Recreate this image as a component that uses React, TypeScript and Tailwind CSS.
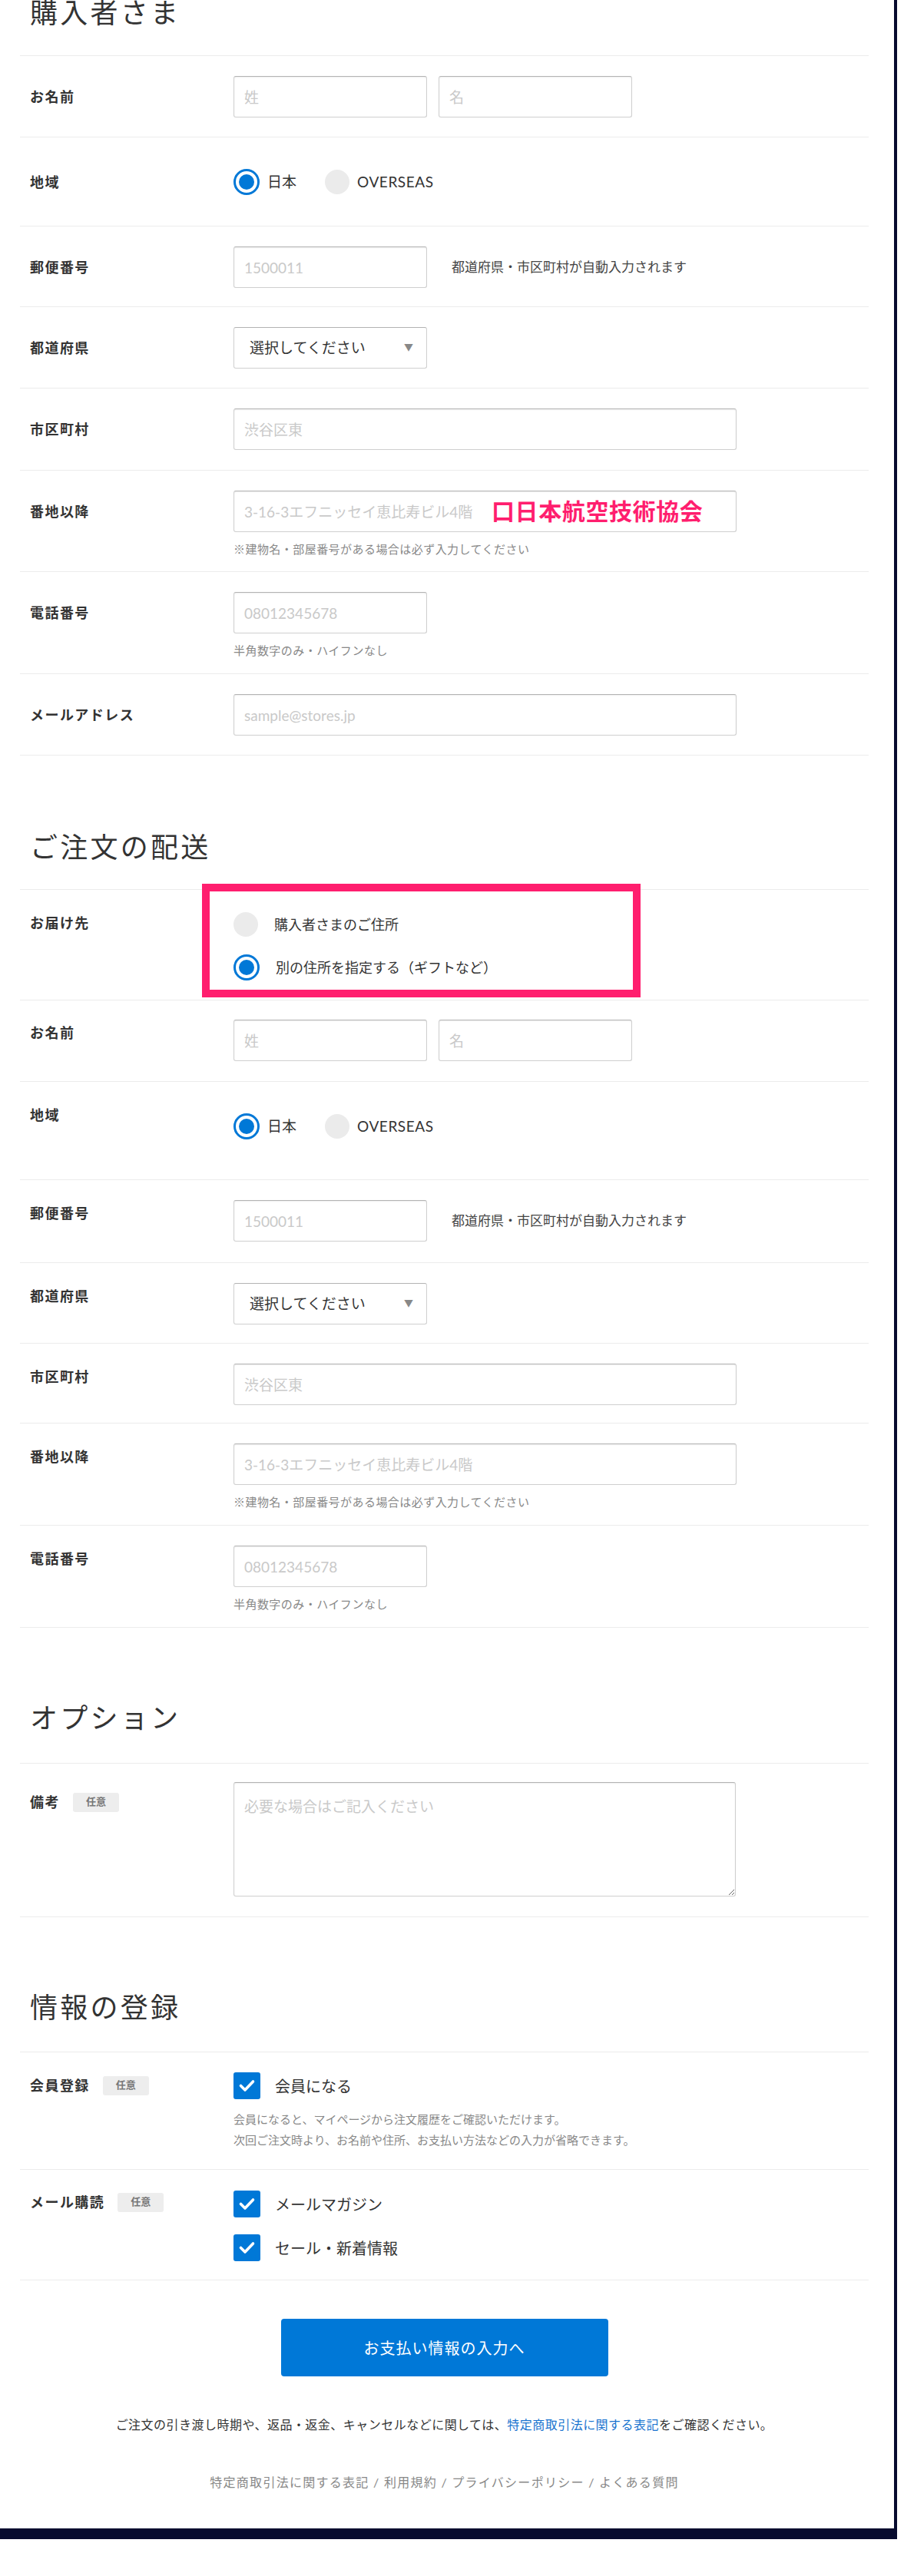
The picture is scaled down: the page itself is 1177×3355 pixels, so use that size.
import React from "react";

const inputCls =
  "h-[54px] rounded-[3px] border border-[#cfcfcf] border-t-[#b3b3b3] bg-white px-[13px] text-[19px] text-[#333] placeholder:text-[#c9c9c9] shadow-[inset_0_1px_2px_rgba(0,0,0,0.07)] outline-none";

type RowProps = {
  label: string;
  badge?: boolean;
  labelH?: string;
  pt?: string;
  pb?: string;
  children: React.ReactNode;
};

const Row = ({ label, badge, labelH = "h-[54px]", pt = "pt-[26px]", pb = "pb-[25px]", children }: RowProps) => (
  <div className={`relative flex border-b border-[#ececec] ${pt} ${pb}`}>
    <div className={`flex w-[278px] shrink-0 items-center gap-[17px] self-start pl-[13px] ${labelH}`}>
      <span className="text-[18px] font-bold tracking-[0.08em] text-[#333]">{label}</span>
      {badge && (
        <span className="flex h-[25px] w-[60px] items-center justify-center rounded-[3px] bg-[#ededed] text-[13px] font-bold text-[#777]">
          任意
        </span>
      )}
    </div>
    <div className="min-w-0 flex-1">{children}</div>
  </div>
);

const Field = ({ placeholder, w }: { placeholder: string; w: string }) => (
  <input placeholder={placeholder} className={`${inputCls} ${w}`} />
);

const Helper = ({ text }: { text: string }) => (
  <p className="mt-[12px] text-[15px] leading-[20px] tracking-[0.03em] text-[#888]">{text}</p>
);

const RadioOn = () => (
  <span className="flex h-[34px] w-[34px] shrink-0 items-center justify-center rounded-full border-[3px] border-[#0078d7] bg-white">
    <span className="h-[20px] w-[20px] rounded-full bg-[#0078d7]" />
  </span>
);

const RadioOff = () => <span className="block h-[32px] w-[32px] shrink-0 rounded-full bg-[#ebebeb]" />;

const CheckBox = () => (
  <span className="flex h-[35px] w-[35px] shrink-0 items-center justify-center rounded-[3px] bg-[#0078d7]">
    <svg width="35" height="35" viewBox="0 0 35 35" fill="none">
      <path d="M9.5 17.5 L15 23 L25.5 12" stroke="white" strokeWidth="3.6" strokeLinecap="round" strokeLinejoin="round" />
    </svg>
  </span>
);

const Heading = ({ text, className }: { text: string; className: string }) => (
  <h2 className={`pl-[13px] text-[36px] leading-[38px] tracking-[0.09em] text-[#333] ${className}`}>{text}</h2>
);

const Region = ({ pb = "pb-[25px]", labelH = "h-[64px]" }: { pb?: string; labelH?: string }) => (
  <Row label="地域" labelH={labelH} pb={pb}>
    <div className="flex h-[64px] items-center">
      <RadioOn />
      <span className="ml-[10px] text-[19px] text-[#333]">日本</span>
      <span className="ml-[37px] block">
        <RadioOff />
      </span>
      <span className="ml-[10px] text-[19px] tracking-[0.03em] text-[#333]">OVERSEAS</span>
    </div>
  </Row>
);

const Select = () => (
  <div className="flex h-[54px] w-[252px] items-center justify-between rounded-[3px] border border-[#cfcfcf] border-t-[#b3b3b3] bg-white pl-[20px] pr-[17px]">
    <span className="text-[19px] text-[#333]">選択してください</span>
    <span className="text-[12px] text-[#888]">▼</span>
  </div>
);

const NameFields = () => (
  <div className="flex gap-[15px]">
    <Field placeholder="姓" w="w-[252px]" />
    <Field placeholder="名" w="w-[252px]" />
  </div>
);

export default function App() {
  return (
    <div className="min-h-[3355px] bg-white font-['Lato','Noto_Sans_CJK_JP',sans-serif] text-[#333]">
      <div className="w-[1168px] border-b-[14px] border-r-[4px] border-[#070b2e] pb-[48px]">
        <div className="ml-[26px] w-[1105px]">
          {/* 購入者 */}
          <Heading text="購入者さま" className="mt-[-3px] mb-[37px]" />
          <div className="border-t border-[#ececec]">
            <Row label="お名前">
              <NameFields />
            </Row>
            <Region />
            <Row label="郵便番号" pb="pb-[24px]">
              <div className="flex items-center gap-[32px]">
                <Field placeholder="1500011" w="w-[252px]" />
                <span className="text-[17px] text-[#444]">都道府県・市区町村が自動入力されます</span>
              </div>
            </Row>
            <Row label="都道府県">
              <Select />
            </Row>
            <Row label="市区町村" pb="pb-[26px]">
              <Field placeholder="渋谷区東" w="w-[655px]" />
            </Row>
            <Row label="番地以降" pb="pb-[19px]">
              <div className="relative w-[655px]">
                <Field placeholder="3-16-3エフニッセイ恵比寿ビル4階" w="w-[655px]" />
                <span className="pointer-events-none absolute left-[336px] top-[6px] text-[30px] font-bold leading-[40px] tracking-[0.02em] text-[#ff1e6e]">
                  口日本航空技術協会
                </span>
              </div>
              <Helper text="※建物名・部屋番号がある場合は必ず入力してください" />
            </Row>
            <Row label="電話番号" pb="pb-[20px]">
              <Field placeholder="08012345678" w="w-[252px]" />
              <Helper text="半角数字のみ・ハイフンなし" />
            </Row>
            <Row label="メールアドレス">
              <Field placeholder="sample@stores.jp" w="w-[655px]" />
            </Row>
          </div>

          {/* 配送 */}
          <Heading text="ご注文の配送" className="mt-[100px] mb-[36px]" />
          <div className="border-t border-[#ececec]">
            <Row label="お届け先" labelH="h-[34px]" pb="pb-[23px]">
              <div className="flex flex-col gap-[18px]">
                <div className="flex h-[38px] items-center gap-[21px]">
                  <RadioOff />
                  <span className="text-[18px] text-[#333]">購入者さまのご住所</span>
                </div>
                <div className="flex h-[38px] items-center gap-[21px]">
                  <RadioOn />
                  <span className="text-[18px] text-[#333]">別の住所を指定する（ギフトなど）</span>
                </div>
              </div>
              <div className="pointer-events-none absolute left-[237px] top-[-8px] h-[148px] w-[571px] border-[10px] border-[#ff1e6e]" />
            </Row>
            <Row label="お名前" labelH="h-[34px]" pt="pt-[25px]" pb="pb-[26px]">
              <NameFields />
            </Row>
            <Region pb="pb-[37px]" labelH="h-[34px]" />
            <Row label="郵便番号" labelH="h-[34px]" pb="pb-[27px]">
              <div className="flex items-center gap-[32px]">
                <Field placeholder="1500011" w="w-[252px]" />
                <span className="text-[17px] text-[#444]">都道府県・市区町村が自動入力されます</span>
              </div>
            </Row>
            <Row label="都道府県" labelH="h-[34px]" pb="pb-[24px]">
              <Select />
            </Row>
            <Row label="市区町村" labelH="h-[34px]" pb="pb-[23px]">
              <Field placeholder="渋谷区東" w="w-[655px]" />
            </Row>
            <Row label="番地以降" labelH="h-[34px]" pb="pb-[20px]">
              <Field placeholder="3-16-3エフニッセイ恵比寿ビル4階" w="w-[655px]" />
              <Helper text="※建物名・部屋番号がある場合は必ず入力してください" />
            </Row>
            <Row label="電話番号" labelH="h-[34px]" pb="pb-[20px]">
              <Field placeholder="08012345678" w="w-[252px]" />
              <Helper text="半角数字のみ・ハイフンなし" />
            </Row>
          </div>

          {/* オプション */}
          <Heading text="オプション" className="mt-[98px] mb-[40px]" />
          <div className="border-t border-[#ececec]">
            <Row label="備考" badge labelH="h-[52px]" pt="pt-[24px]" pb="pb-[26px]">
              <textarea
                placeholder="必要な場合はご記入ください"
                className="block h-[149px] w-[654px] rounded-[3px] border border-[#cfcfcf] border-t-[#b3b3b3] bg-white px-[13px] pt-[18px] text-[19px] leading-[26px] text-[#333] placeholder:text-[#c9c9c9] shadow-[inset_0_1px_2px_rgba(0,0,0,0.07)] outline-none"
              />
            </Row>
          </div>

          {/* 情報の登録 */}
          <Heading text="情報の登録" className="mt-[98px] mb-[39px]" />
          <div className="border-t border-[#ececec]">
            <Row label="会員登録" badge labelH="h-[34px]" pb="pb-[24px]">
              <div className="flex items-center gap-[19px]">
                <CheckBox />
                <span className="text-[20px] text-[#333]">会員になる</span>
              </div>
              <div className="mt-[13px] text-[15px] leading-[27px] text-[#888]">
                <p>会員になると、マイページから注文履歴をご確認いただけます。</p>
                <p>次回ご注文時より、お名前や住所、お支払い方法などの入力が省略できます。</p>
              </div>
            </Row>
            <Row label="メール購読" badge labelH="h-[30px]" pt="pt-[27px]" pb="pb-[24px]">
              <div className="flex flex-col gap-[22px]">
                <div className="flex items-center gap-[19px]">
                  <CheckBox />
                  <span className="text-[20px] text-[#333]">メールマガジン</span>
                </div>
                <div className="flex items-center gap-[19px]">
                  <CheckBox />
                  <span className="text-[20px] text-[#333]">セール・新着情報</span>
                </div>
              </div>
            </Row>
          </div>

          <button className="mx-auto mt-[50px] block h-[75px] w-[426px] rounded-[4px] bg-[#0078d7] text-[20px] tracking-[0.05em] text-white">
            お支払い情報の入力へ
          </button>

          <p className="mt-[51px] text-center text-[16px] leading-[24px] tracking-[0.03em] text-[#333]">
            ご注文の引き渡し時期や、返品・返金、キャンセルなどに関しては、
            <span className="text-[#1a74cf]">特定商取引法に関する表記</span>をご確認ください。
          </p>

          <p className="mt-[51px] text-center text-[16px] leading-[24px] tracking-[0.08em] text-[#888]">
            特定商取引法に関する表記 / 利用規約 / プライバシーポリシー / よくある質問
          </p>
        </div>
      </div>
    </div>
  );
}
